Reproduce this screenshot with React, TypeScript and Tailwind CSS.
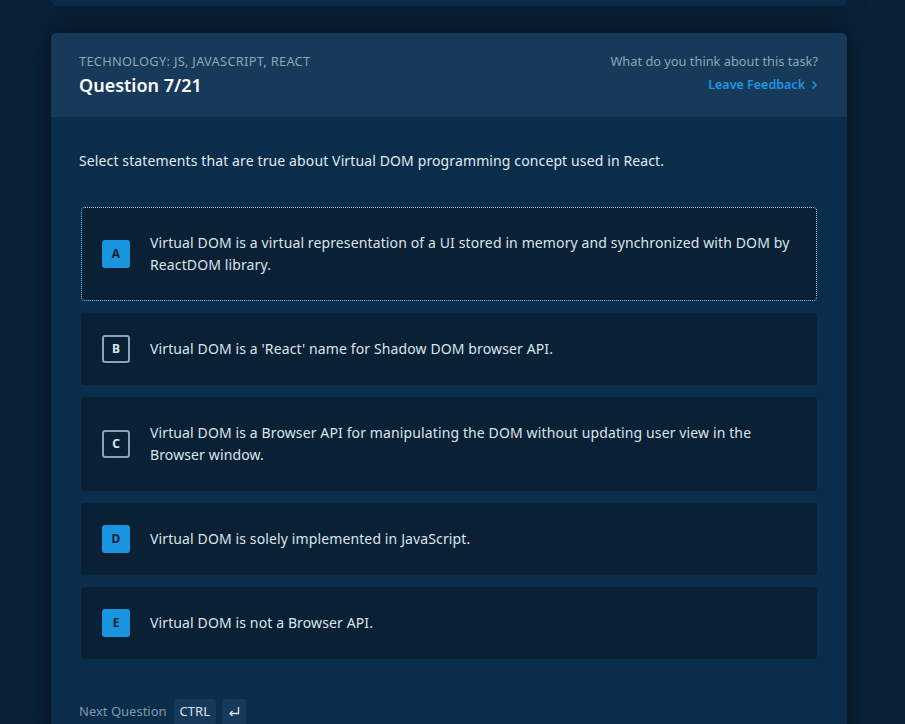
import React from "react";

const options = [
  { key: "A", text: "Virtual DOM is a virtual representation of a UI stored in memory and synchronized with DOM by ReactDOM library.", filled: true, selected: true },
  { key: "B", text: "Virtual DOM is a 'React' name for Shadow DOM browser API.", filled: false },
  { key: "C", text: "Virtual DOM is a Browser API for manipulating the DOM without updating user view in the Browser window.", filled: false },
  { key: "D", text: "Virtual DOM is solely implemented in JavaScript.", filled: true },
  { key: "E", text: "Virtual DOM is not a Browser API.", filled: true },
];

function Badge({ letter, filled }: { letter: string; filled: boolean }) {
  if (filled) {
    return (
      <div className="w-[28px] h-[28px] shrink-0 rounded-[3px] bg-[#1995e0] flex items-center justify-center text-[12px] font-bold text-[#0a2034]">
        {letter}
      </div>
    );
  }
  return (
    <div className="w-[28px] h-[28px] shrink-0 rounded-[3px] border-2 border-[#8aa3b6] flex items-center justify-center text-[12px] font-bold text-[#dfe8ef]">
      {letter}
    </div>
  );
}

export default function App() {
  return (
    <div
      className="w-[905px] h-[724px] overflow-hidden bg-[#0a2238] relative"
      style={{ fontFamily: '"Noto Sans", "Open Sans", sans-serif' }}
    >
      <div className="ml-[51px] w-[796px] h-[6px] rounded-b-md bg-[#0d2c4a] shadow-[0_0_24px_rgba(0,0,0,0.45)]" />
      <div className="ml-[51px] w-[796px] mt-[27px] rounded-md overflow-hidden bg-[#0b2d4c] shadow-[0_0_30px_rgba(0,0,0,0.55)]">
        <div className="h-[84px] bg-[#173a5a] px-[28px] flex justify-between items-start pt-[20px]">
          <div>
            <div className="text-[12.8px] leading-[16px] tracking-[0.3px] text-[#8ea5b8] uppercase">
              Technology: JS, JavaScript, React
            </div>
            <div className="text-[18px] leading-[24px] font-semibold text-white mt-[4px]">Question 7/21</div>
          </div>
          <div className="flex flex-col items-end pr-[1px]">
            <div className="text-[12.8px] leading-[16px] text-[#8ea5b8]">What do you think about this task?</div>
            <div className="flex items-center gap-[5px] mt-[8px] text-[12.5px] leading-[16px] font-semibold text-[#1c96e0]">
              Leave Feedback
              <svg width="8" height="10" viewBox="0 0 8 10" fill="none" stroke="#1c96e0" strokeWidth="1.6">
                <path d="M2.5 1.5 6 5l-3.5 3.5" />
              </svg>
            </div>
          </div>
        </div>
        <div className="pt-[33px] pb-[20px]">
          <p className="px-[28px] text-[14px] leading-[22px] tracking-[0.12px] text-[#e1e9f0]">
            Select statements that are true about Virtual DOM programming concept used in React.
          </p>
          <div className="px-[30px] mt-[35px] flex flex-col gap-[12px]">
            {options.map((o) => (
              <div
                key={o.key}
                className={
                  o.selected
                    ? "flex items-center gap-[20px] pl-[20px] pr-[20px] py-[24px] rounded-[4px] bg-[#0a2034] border border-dotted border-[#8fd3fb]"
                    : "flex items-center gap-[20px] pl-[21px] pr-[21px] py-[25px] rounded-[4px] bg-[#0a2034]"
                }
              >
                <div className="h-[22px] flex items-center">
                  <Badge letter={o.key} filled={o.filled} />
                </div>
                <div className="text-[14px] leading-[22px] tracking-[0.12px] text-[#dbe4ec]">{o.text}</div>
              </div>
            ))}
          </div>
          <div className="px-[28px] mt-[40px] flex items-center gap-[6px]">
            <span className="text-[13px] text-[#7f97aa] mr-[1px]">Next Question</span>
            <span className="h-[26px] px-[6px] rounded-[3px] bg-[#173a5a] text-[13px] text-[#dbe4ec] flex items-center">CTRL</span>
            <span className="h-[26px] w-[24px] rounded-[3px] bg-[#173a5a] flex items-center justify-center">
              <svg width="14" height="12" viewBox="0 0 14 12" fill="none" stroke="#dbe4ec" strokeWidth="1.3">
                <path d="M11.5 1v6.5H3" />
                <path d="M5.5 5 3 7.5 5.5 10" />
              </svg>
            </span>
          </div>
        </div>
      </div>
    </div>
  );
}
